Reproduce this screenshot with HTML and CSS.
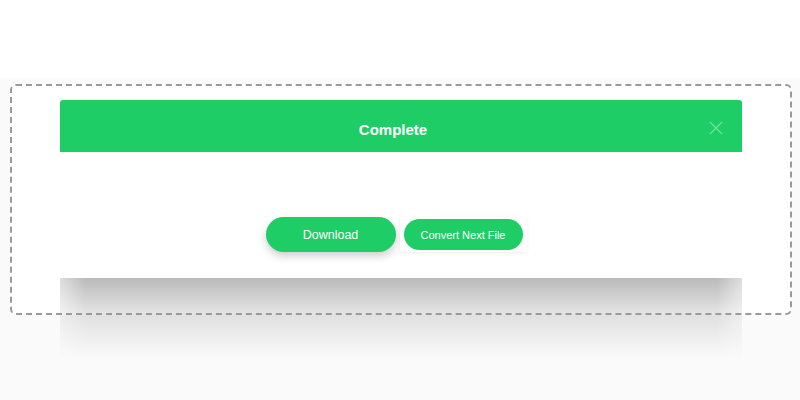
FILE: index.html
```html
<!DOCTYPE html>
<html>
<head>
    <title>Complete</title>
    <link rel="stylesheet" href="styles.css">
</head>
<body>
    <div class="top"></div>
    <div class="stage">
        <div class="frame">
            <div class="modal">
                <div class="modal-header">
                    <h2>Complete</h2>
                    <span class="close">
                        <svg width="14" height="14" viewBox="0 0 14 14">
                            <path d="M1 1 L13 13 M13 1 L1 13" stroke="rgba(255,255,255,0.4)" stroke-width="1.1" fill="none"/>
                        </svg>
                    </span>
                </div>
                <div class="modal-body">
                    <button class="button button-big">Download</button>
                    <div class="next-wrap">
                        <button class="button button-small">Convert Next File</button>
                    </div>
                </div>
            </div>
        </div>
    </div>
</body>
</html>
```

FILE: styles.css
```css
body {
    margin: 0;
    font-family: "Liberation Sans", Arial, sans-serif;
    background-color: #fafafa;
}

.top {
    height: 78px;
    background-color: #fff;
}

.stage {
    padding: 6px 8px 0 10px;
    height: 316px;
}

.frame {
    position: relative;
    width: 782px;
    height: 231px;
    box-sizing: border-box;
    padding: 16px 0 0 50px;
    background-color: #fff;
    border-radius: 6px;
}

/* dashed border drawn above the modal shadow */
.frame::before {
    content: '';
    position: absolute;
    inset: 0;
    border: 2px dashed #9a9a9a;
    border-radius: 6px;
    z-index: 2;
    pointer-events: none;
}

.modal {
    position: relative;
    width: 682px;
    background-color: #fff;
}

.modal::after {
    content: '';
    position: absolute;
    left: 0;
    right: 0;
    top: 100%;
    height: 80px;
    background: linear-gradient(to bottom, rgba(0,0,0,0.27), rgba(0,0,0,0.1) 45%, rgba(0,0,0,0));
    -webkit-mask-image: linear-gradient(to right, rgba(0,0,0,0.5), #000 25px, #000 calc(100% - 25px), rgba(0,0,0,0.5));
    mask-image: linear-gradient(to right, rgba(0,0,0,0.5), #000 25px, #000 calc(100% - 25px), rgba(0,0,0,0.5));
}

.modal-header {
    position: relative;
    height: 52px;
    box-sizing: border-box;
    padding-top: 7px;
    display: flex;
    align-items: center;
    justify-content: center;
    background-color: #1ecd66;
    border-radius: 3px 3px 0 0;
}

.modal-header h2 {
    margin: 0 0 0 -16px;
    font-size: 15px;
    font-weight: bold;
    color: #fff;
}

.close {
    position: absolute;
    right: 19px;
    top: 21px;
    width: 14px;
    height: 14px;
}

.close svg {
    display: block;
}

.modal-body {
    height: 126px;
    display: flex;
    align-items: flex-end;
    justify-content: center;
    gap: 4px;
    padding: 0 10px 26px 0;
    box-sizing: border-box;
}

.button {
    font-family: "Liberation Sans", Arial, sans-serif;
    color: #fff;
    background-color: #1ecd66;
    border: none;
    border-radius: 20px;
    cursor: pointer;
}

.button-big {
    width: 130px;
    height: 35px;
    font-size: 12.5px;
    box-shadow: 0 4px 8px rgba(0,0,0,0.2);
}

.next-wrap {
    padding: 2px 4px;
    background-color: #fff;
    box-shadow: 0 1px 3px rgba(0,0,0,0.08);
}

.button-small {
    display: block;
    width: 119px;
    height: 31px;
    font-size: 11px;
    border-radius: 16px;
}
```
